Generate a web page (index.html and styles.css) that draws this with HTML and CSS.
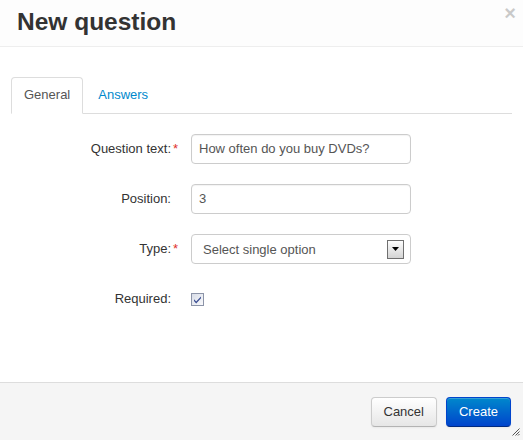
FILE: index.html
```html
<!DOCTYPE html>
<html>
<head>
<meta charset="utf-8">
<link rel="stylesheet" href="styles.css">
</head>
<body>
<div class="modal">
  <div class="modal-header">
    <h3 class="title">New question</h3>
    <span class="close">×</span>
  </div>
  <div class="modal-body">
    <ul class="tabs">
      <li class="tab active">General</li>
      <li class="tab link">Answers</li>
    </ul>
    <div class="form">
      <label class="label">Question text:</label>
      <span class="req">*</span>
      <div class="input">How often do you buy DVDs?</div>

      <label class="label">Position:</label>
      <span class="req"></span>
      <div class="input">3</div>

      <label class="label">Type:</label>
      <span class="req">*</span>
      <div class="select">
        <span class="select-text">Select single option</span>
        <span class="select-btn">
          <svg width="7" height="4" viewBox="0 0 7 4"><path d="M0 0H7L3.5 4Z" fill="#000"/></svg>
        </span>
      </div>

      <label class="label">Required:</label>
      <span class="req"></span>
      <div class="check-cell">
        <svg class="checkbox" width="13" height="13" viewBox="0 0 13 13">
          <defs>
            <linearGradient id="cb" x1="0" y1="0" x2="1" y2="1">
              <stop offset="0" stop-color="#d6dbe6"/>
              <stop offset="1" stop-color="#fbfbfd"/>
            </linearGradient>
          </defs>
          <rect x="0.5" y="0.5" width="12" height="12" fill="url(#cb)" stroke="#8c94a8"/>
          <path d="M3 6.2 L5.2 8.6 L10 3.4 L10 5.2 L5.2 10.4 L3 8 Z" fill="#3a4d92"/>
        </svg>
      </div>
    </div>
  </div>
  <div class="modal-footer">
    <button class="btn">Cancel</button>
    <button class="btn btn-primary">Create</button>
  </div>
  <svg class="grip" width="8" height="8" viewBox="0 0 8 8">
    <path d="M7.5 0.5 L0.5 7.5 M7.5 3.5 L3.5 7.5 M7.5 6 L6 7.5" stroke="#555" stroke-width="1"/>
  </svg>
</div>
</body>
</html>
```
FILE: styles.css
```css
html, body {
  margin: 0;
  padding: 0;
  background: #fff;
}
body {
  font-family: "Liberation Sans", Arial, sans-serif;
  font-size: 13px;
  color: #333;
}
.modal {
  position: relative;
  width: 523px;
  height: 440px;
  display: flex;
  flex-direction: column;
  overflow: hidden;
}
.modal-header {
  height: 46px;
  border-bottom: 1px solid #eee;
  display: flex;
  justify-content: space-between;
  align-items: flex-start;
  padding: 0 7px 0 17px;
  background: #fdfdfd;
}
.title {
  margin: 0;
  font-size: 24.5px;
  line-height: 44px;
  font-weight: bold;
  color: #333;
}
.close {
  font-size: 20px;
  font-weight: bold;
  line-height: 20px;
  margin-top: 3px;
  color: #000;
  opacity: 0.2;
}
.modal-body {
  flex: 1;
  padding: 30px 11px 0;
}
.tabs {
  list-style: none;
  margin: 0;
  padding: 0;
  display: flex;
  border-bottom: 1px solid #ddd;
}
.tab {
  margin-bottom: -1px;
  margin-right: 2px;
  padding: 8px 12px 9px;
  line-height: 18px;
  border: 1px solid transparent;
  border-radius: 4px 4px 0 0;
}
.tab.active {
  border-color: #ddd #ddd transparent;
  background: #fff;
  color: #555;
}
.tab.link {
  color: #0088cc;
}
.form {
  margin-top: 20px;
  display: grid;
  grid-template-columns: 160px 20px 220px;
  grid-auto-rows: 30px;
  row-gap: 20px;
}
.label {
  text-align: right;
  line-height: 30px;
  color: #333;
}
.req {
  color: #e0312b;
  padding-left: 2px;
  line-height: 30px;
}
.input {
  box-sizing: border-box;
  height: 30px;
  border: 1px solid #ccc;
  border-radius: 4px;
  padding: 0 7px;
  line-height: 28px;
  color: #555;
  box-shadow: inset 0 1px 1px rgba(0,0,0,0.05);
}
.select {
  box-sizing: border-box;
  height: 30px;
  border: 1px solid #ccc;
  border-radius: 4px;
  padding: 0 6px 0 11px;
  display: flex;
  align-items: center;
  justify-content: space-between;
  color: #555;
}
.select-btn {
  box-sizing: border-box;
  width: 17px;
  height: 19px;
  border: 1px solid #6f6f6f;
  background: linear-gradient(#fdfdfd, #d4d4d4);
  display: flex;
  align-items: center;
  justify-content: center;
}
.check-cell {
  display: flex;
  align-items: center;
}
.checkbox {
  display: block;
}
.modal-footer {
  border-top: 1px solid #ddd;
  background: #f5f5f5;
  padding: 14px 12px 13px;
  display: flex;
  justify-content: flex-end;
  gap: 9px;
}
.btn {
  font-family: "Liberation Sans", Arial, sans-serif;
  font-size: 13px;
  line-height: 20px;
  padding: 4px 12px;
  border: 1px solid #ccc;
  border-bottom-color: #b3b3b3;
  border-radius: 4px;
  background: linear-gradient(#ffffff, #e6e6e6);
  color: #333;
  box-shadow: inset 0 1px 0 rgba(255,255,255,0.2), 0 1px 2px rgba(0,0,0,0.05);
}
.btn-primary {
  color: #fff;
  background: linear-gradient(#0088cc, #0044cc);
  border-color: #0044cc #0044cc #002a80;
}
.grip {
  position: absolute;
  right: 3px;
  bottom: 4px;
}
```
